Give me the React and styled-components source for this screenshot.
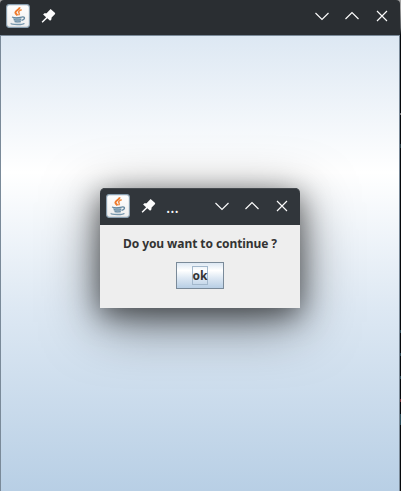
import React from "react";
import styled, { createGlobalStyle } from "styled-components";

const GlobalStyle = createGlobalStyle`
  html, body { margin: 0; padding: 0; background: #07090c; overflow: hidden; }
  * { box-sizing: border-box; }
`;

const Desktop = styled.div`
  position: relative;
  width: 401px;
  height: 491px;
  overflow: hidden;
  background:
    linear-gradient(#777, #777) 400px 113px / 1px 2px no-repeat,
    linear-gradient(#263b40, #263b40) 400px 144px / 1px 4px no-repeat,
    linear-gradient(#294552, #294552) 400px 330px / 1px 3px no-repeat,
    linear-gradient(#294552, #294552) 400px 353px / 1px 3px no-repeat,
    linear-gradient(#294552, #294552) 400px 376px / 1px 3px no-repeat,
    linear-gradient(#742f35, #742f35) 400px 399px / 1px 3px no-repeat,
    linear-gradient(#294b57, #294b57) 400px 414px / 1px 11px no-repeat,
    linear-gradient(#a3a3a3 0 8px, #53575a 28px, #07090c 35px);
  font-family: "Noto Sans", sans-serif;
`;

const Frame = styled.main`
  display: flex;
  flex-direction: column;
  width: 400px;
  height: 491px;
`;

const TitleBar = styled.header`
  display: flex;
  align-items: center;
  flex: none;
  height: ${(p) => (p.$dialog ? 37 : 35)}px;
  padding: ${(p) => (p.$dialog ? "0 6px 1px" : "0 6px 3px")};
  background: ${(p) => (p.$dialog ? "#31363b" : "#2a2e32")};
  border-radius: ${(p) => (p.$dialog ? "5px 5px 0 0" : "4px 4px 0 0")};
  box-shadow: ${(p) => (p.$dialog ? "inset 0 1px #454a4f" : "none")};
  color: #fcfcfc;
`;

const Icon = styled.svg`
  display: block;
  flex: none;
`;

const PinSlot = styled.div`
  display: flex;
  width: 16px;
  margin-left: 10px;
`;

const Title = styled.span`
  flex: 1;
  padding: 2px 0 0 10px;
  font-size: 16px;
  line-height: 20px;
`;

const WindowButtons = styled.div`
  display: flex;
  gap: 14px;
  padding-right: 4px;
`;

const Canvas = styled.section`
  flex: 1;
  border: solid #7a8a99;
  border-width: 1px 1px 0;
  background: linear-gradient(#dde8f3, #ffffff 30%, #dde8f3 60%, #b8cfe5);
`;

const Dialog = styled.section`
  position: absolute;
  left: 100px;
  top: 188px;
  width: 200px;
  height: 120px;
  border-radius: 5px 5px 0 0;
  box-shadow: 0 14px 56px rgba(0, 0, 0, 0.5), 0 7px 28px rgba(0, 0, 0, 0.5);
`;

const DialogBody = styled.div`
  display: flex;
  flex-direction: column;
  align-items: center;
  height: 83px;
  padding-top: 10px;
  background: #eeeeee;
  color: #333333;
  font-size: 12px;
  font-weight: 700;
`;

const Message = styled.div`
  height: 17px;
  line-height: 17px;
  letter-spacing: -0.08px;
  white-space: nowrap;
`;

const OkButton = styled.button`
  display: flex;
  align-items: center;
  justify-content: center;
  width: 48px;
  height: 27px;
  margin: 10px 0 0;
  padding: 0;
  border: 1px solid #7a8a99;
  background: linear-gradient(#dde8f3, #ffffff 30%, #dde8f3 60%, #b8cfe5);
  color: #333333;
  font: inherit;
`;

const FocusLabel = styled.span`
  width: 16px;
  height: 19px;
  border: 1px solid #a3b8cc;
  line-height: 17px;
  display: flex;
  justify-content: center;
`;

const JavaIcon = () => (
  <Icon width="24" height="24" viewBox="0 0 24 24" fill="none" aria-label="Java">
    <defs>
      <linearGradient id="tile" x1="0" y1="0" x2="0" y2="1">
        <stop stopColor="#ffffff" />
        <stop offset="1" stopColor="#eeeeee" />
      </linearGradient>
    </defs>
    <rect x="0.6" y="0.6" width="22.8" height="22.8" rx="2.8" fill="url(#tile)" stroke="#8ba1b2" strokeWidth="1.1" />
    <path d="M13.5 3.2c.6 2.2-4 3.1-4.1 5.3 0 1.2 1.2 1.9 2.2 2.9" stroke="#f07b2c" strokeWidth="2" />
    <path d="M15.7 5.8c-2.6.8-3.9 1.9-2.7 3.1.7.8.3 1.6-.5 2.3" stroke="#f08a40" strokeWidth="1.5" />
    <path d="M6.6 13c1.8.8 6.6.7 9.1.1l-.7 3.9c-.3 1.5-6.5 1.5-7.1 0Z" fill="#a3b8c6" />
    <path d="M6 13.1c2 .8 6.9.7 9.8 0M8 15.4c1.7.6 5.3.6 7 0M8.7 17.6c1.7.4 4.5.4 6.1 0" stroke="#6488a1" strokeWidth="1.1" />
    <path d="M15.7 13.1c3.7-.9 3.8 2.2-.2 3.3" stroke="#6488a1" strokeWidth="1.3" />
    <path d="M5.5 19.2c-1.4 1 1.8 1.3 6 1.3 4.1 0 6.5-.4 6.8-1.3" stroke="#7897ac" strokeWidth="1.3" />
  </Icon>
);

const PinIcon = () => (
  <Icon width="16" height="16" viewBox="0 0 16 16" fill="currentColor">
    <path d="M10.6 1 15.1 5v1.1L11.6 9.4l-.2 2.2-1.3 1.2L7.3 10.3 2.6 14.8 1.6 13.8 6.1 9.2 3.1 6.4l1.3-1.2 2.2.1Z" />
  </Icon>
);

const controls = {
  Minimize: "M1.5 5 8 11.5 14.5 5",
  Maximize: "M1.5 11 8 4.5 14.5 11",
  Close: "M3 3 13 13M13 3 3 13",
};

const Controls = () => (
  <WindowButtons>
    {Object.entries(controls).map(([name, path]) => (
      <Icon key={name} width="16" height="16" viewBox="0 0 16 16" fill="none" stroke="currentColor" strokeWidth="1.15" aria-label={name}>
        <path d={path} />
      </Icon>
    ))}
  </WindowButtons>
);

const WindowBar = ({ dialog = false, title }) => (
  <TitleBar $dialog={dialog}>
    <JavaIcon />
    <PinSlot><PinIcon /></PinSlot>
    <Title>{title}</Title>
    <Controls />
  </TitleBar>
);

export default function App() {
  return (
    <Desktop>
      <GlobalStyle />
      <Frame>
        <WindowBar />
        <Canvas />
      </Frame>
      <Dialog role="dialog">
        <WindowBar dialog title="..." />
        <DialogBody>
          <Message>Do you want to continue ?</Message>
          <OkButton><FocusLabel>ok</FocusLabel></OkButton>
        </DialogBody>
      </Dialog>
    </Desktop>
  );
}
